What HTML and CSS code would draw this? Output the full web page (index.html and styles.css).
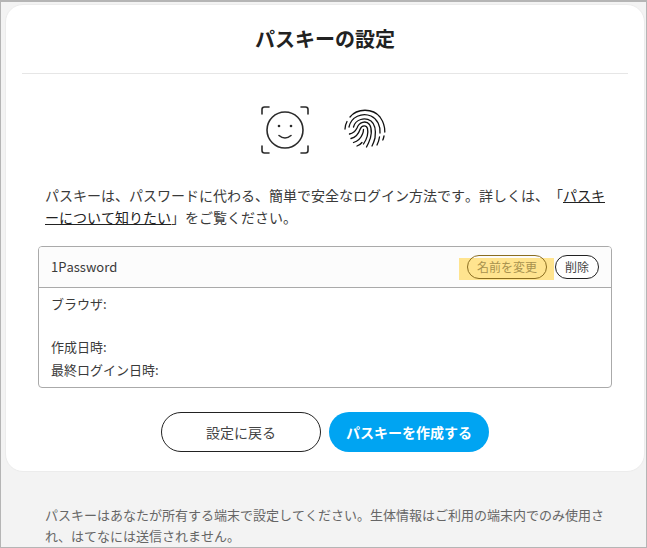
FILE: index.html
```html
<!DOCTYPE html>
<html lang="ja">
<head>
<meta charset="utf-8">
<title>パスキーの設定</title>
<link rel="stylesheet" href="styles.css">
</head>
<body>
<div class="page">
  <main class="card">
    <h1 class="title">パスキーの設定</h1>
    <div class="icons">
      <svg class="icon-face" width="48" height="48" viewBox="0 0 48 48" fill="none" stroke="#2b2b2b" stroke-width="1.6" stroke-linecap="round">
        <path d="M1 8V3.500Q1 1 3.500 1H8M40 1h4.500Q47 1 47 3.500V8M47 40v4.500Q47 47 44.500 47H40M8 47H3.500Q1 47 1 44.500V40"/>
        <circle cx="24" cy="24" r="18"/>
        <path d="M18 29.500Q24 34.500 30 29.500"/>
        <circle cx="18" cy="20" r="1.300" fill="#2b2b2b" stroke="none"/>
        <circle cx="30" cy="20" r="1.300" fill="#2b2b2b" stroke="none"/>
      </svg>
      <svg class="icon-print" width="42" height="42" viewBox="0 0 42 42" fill="none" stroke="#111" stroke-width="1.300" stroke-linecap="round">
        <path d="M1 20Q1.300 15.500 3 12.500"/>
        <path d="M6 8C13 -1 29 -1 36 8C39.500 13 41 18 40.800 23"/>
        <path d="M5 18C7 8 18 3 27 7C33.500 10 36.500 17 36 24"/>
        <path d="M40 27Q39.500 29.500 38.800 31"/>
        <path d="M35.500 28Q35 32 33 36"/>
        <path d="M9.500 18C11.500 10 21 8 27 12C31.500 15.500 32 22 31 29Q30 33 28 37"/>
        <path d="M5.500 25Q10.500 24 13 19C15 13 22 11 25.500 15.500C28.500 20 27.500 28 24.500 34L22.500 38"/>
        <path d="M7 29.500Q13.500 28 16 20.500C18 15.500 22.500 16 23.500 19.500C24.500 24 22.500 30.500 19.500 35"/>
        <path d="M9.500 33.500Q16 31.500 18.500 25Q19.500 22.500 19.500 20.500"/>
        <path d="M13 37Q16 36 18 33.500"/>
      </svg>
    </div>
    <p class="lead">パスキーは、パスワードに代わる、簡単で安全なログイン方法です。詳しくは、「<a class="link" href="#">パスキーについて知りたい</a>」をご覧ください。</p>
    <section class="passkey">
      <header class="passkey-head">
        <span class="passkey-name">1Password</span>
        <div class="passkey-actions">
          <span class="mark"><button class="pill pill-marked" type="button">名前を変更</button></span>
          <button class="pill" type="button">削除</button>
        </div>
      </header>
      <dl class="passkey-body">
        <dt class="row row-gap">ブラウザ:</dt>
        <dt class="row">作成日時:</dt>
        <dt class="row">最終ログイン日時:</dt>
      </dl>
    </section>
    <div class="actions">
      <button class="btn btn-outline" type="button">設定に戻る</button>
      <button class="btn btn-primary" type="button">パスキーを作成する</button>
    </div>
  </main>
  <p class="note">パスキーはあなたが所有する端末で設定してください。生体情報はご利用の端末内でのみ使用され、はてなには送信されません。</p>
</div>
</body>
</html>
```
FILE: styles.css
```css
* { box-sizing: border-box; }
html, body { margin: 0; height: 100%; }
body {
  font-family: "Noto Sans CJK JP", sans-serif;
  font-size: 13px;
  color: #3a3a3a;
  overflow: hidden;
  text-spacing-trim: space-all;
  font-kerning: none;
}
.page {
  height: 548px;
  overflow: hidden;
  background: #f3f3f3;
  border: 1px solid #b5b5b5;
  border-top-width: 2px;
  padding: 2px 1px 0 4px;
}
.card {
  height: 468px;
  background: #fff;
  border: 1px solid #ececec;
  border-radius: 18px;
  padding: 0 16px;
}
.title {
  margin: 0;
  height: 69px;
  border-bottom: 1px solid #e6e6e6;
  font-size: 20px;
  font-weight: 700;
  line-height: 68px;
  text-align: center;
  color: #222;
}
.icons {
  display: flex;
  justify-content: center;
  align-items: center;
  gap: 35px;
  margin-top: 32px;
  height: 48px;
  padding-right: 3px;
}
.lead {
  margin: 30px 0 0;
  padding: 0 22px 0 23px;
  font-size: 14px;
  line-height: 22px;
  color: #3a3a3a;
}
.link { color: #222; text-decoration: underline; }
.passkey {
  margin: 18px 16px 0 16px;
  height: 142px;
  border: 1px solid #aaa;
  border-radius: 4px;
  overflow: hidden;
}
.passkey-head {
  display: flex;
  justify-content: space-between;
  align-items: center;
  height: 41px;
  padding: 0 12px;
  background: #fcfcfc;
  border-bottom: 1px solid #aaa;
}
.passkey-name { font-size: 13px; line-height: 19px; padding-bottom: 2px; }
.passkey-actions { display: flex; gap: 8px; }
.mark {
  position: relative;
  z-index: 0;
  display: flex;
}
.mark::before {
  content: "";
  position: absolute;
  z-index: -1;
  left: -8px;
  right: -7px;
  top: 3px;
  bottom: -1px;
  background: #ffe48f;
}
.pill {
  height: 24px;
  padding: 0 9px;
  background: #fff;
  border: 1px solid #222;
  border-radius: 12px;
  font: inherit;
  font-size: 12px;
  line-height: 20px;
  color: #444;
}
.pill-marked {
  width: 80px;
  padding: 0;
  background: none;
  border-color: #8a6d20;
  color: #a8924e;
}
.passkey-body {
  margin: 0;
  padding: 4px 12px 0;
}
.row {
  font-size: 13px;
  line-height: 23px;
}
.row-gap { margin-bottom: 20px; }
.actions {
  display: flex;
  justify-content: center;
  gap: 8px;
  margin-top: 24px;
}
.btn {
  width: 160px;
  height: 40px;
  border-radius: 20px;
  font: inherit;
  font-size: 14px;
}
.btn-outline { background: #fff; border: 1px solid #222; color: #444; }
.btn-primary { background: #00a4f2; border: 0; color: #fff; font-weight: 700; }
.note {
  margin: 32px 0 0;
  padding: 0 36px 0 40px;
  font-size: 13px;
  line-height: 21px;
  color: #666;
}
```
